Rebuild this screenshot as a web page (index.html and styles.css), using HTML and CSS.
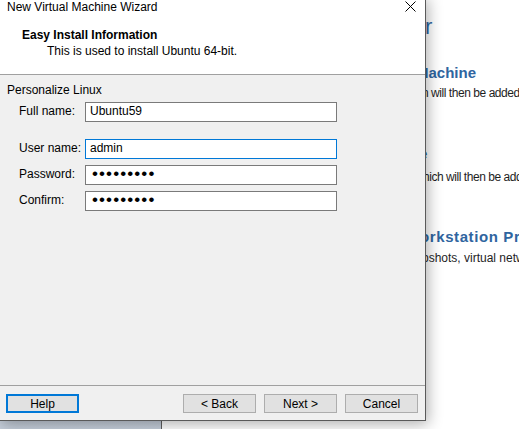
FILE: index.html
```html
<!DOCTYPE html>
<html lang="en">
<head>
<meta charset="utf-8">
<title>New Virtual Machine Wizard</title>
<link rel="stylesheet" href="styles.css">
</head>
<body>
<div class="screen">
  <div class="app">
    <aside class="sidebar"></aside>
    <main class="home">
      <div class="home-col">
        <div class="home-title"><span class="frag f-title">r</span></div>
        <div class="home-head h1"><span class="frag f-m">Machine</span></div>
        <div class="home-text t1"><span class="frag f-n">n will then be added to the top of your library.</span></div>
        <div class="home-head h2"><span class="frag f-e">e</span></div>
        <div class="home-text t2"><span class="frag f-h">hich will then be added to the top of your library.</span></div>
        <div class="home-head h3"><span class="frag f-o">orkstation Pro</span></div>
        <div class="home-text t3"><span class="frag f-p">pshots, virtual network management, and more.</span></div>
      </div>
    </main>
  </div>

  <div class="dialog">
    <div class="titlebar">
      <span class="title">New Virtual Machine Wizard</span>
      <svg class="close" width="11" height="11" viewBox="0 0 11 11" aria-label="Close">
        <path d="M0.5 0.5 L10.5 10.5 M10.5 0.5 L0.5 10.5" stroke="#000" stroke-width="1" fill="none"/>
      </svg>
    </div>
    <div class="header">
      <div class="header-title">Easy Install Information</div>
      <div class="header-sub">This is used to install Ubuntu 64-bit.</div>
    </div>
    <div class="body">
      <div class="group-title">Personalize Linux</div>
      <div class="form">
        <div class="row r-full"><span class="label">Full name:</span><div class="field">Ubuntu59</div></div>
        <div class="row r-user"><span class="label">User name:</span><div class="field focus">admin</div></div>
        <div class="row r-pass"><span class="label">Password:</span><div class="field"><span class="dots">•••••••••</span></div></div>
        <div class="row r-conf"><span class="label">Confirm:</span><div class="field"><span class="dots">•••••••••</span></div></div>
      </div>
    </div>
    <div class="footer">
      <button class="btn btn-default">Help</button>
      <div class="spacer"></div>
      <button class="btn">&lt; Back</button>
      <button class="btn">Next &gt;</button>
      <button class="btn">Cancel</button>
    </div>
  </div>
</div>
</body>
</html>
```
FILE: styles.css
```css
* { box-sizing: border-box; }
html, body { margin: 0; padding: 0; }
body {
  font-family: "Liberation Sans", Arial, sans-serif;
  font-size: 12px;
  color: #000;
  background: #fff;
}
.screen {
  position: relative;
  width: 519px;
  height: 429px;
  overflow: hidden;
  background: #fff;
}

/* background application window */
.app {
  display: flex;
  height: 100%;
}
.sidebar {
  width: 162px;
  flex: none;
  background: linear-gradient(#d5dde7, #c6cfdb);
  border-right: 1px solid #5e5e5e;
}
.home {
  flex: 1;
  background: #fff;
  overflow: hidden;
}
.home-col {
  padding-top: 14px;
  padding-left: 263px;
  white-space: nowrap;
}
.home-title {
  font-size: 22px;
  line-height: 26px;
  color: #2f65a0;
}
.home-head {
  font-size: 15px;
  line-height: 20px;
  font-weight: bold;
  color: #2f65a0;
}
.home-text {
  font-size: 12px;
  line-height: 16px;
  color: #1e1e1e;
}
.h1 { margin-top: 23px; }
.t1 { margin-top: 2px; }
.h2 { margin-top: 43px; }
.t2 { margin-top: 5px; }
.h3 { margin-top: 42px; letter-spacing: 0.6px; }
.t3 { margin-top: 3px; }
.t1, .t2 { letter-spacing: -0.45px; }
.frag { display: inline-block; }
.f-title { margin-left: 0; }
.f-m { margin-left: -9px; }
.f-n { margin-left: -3px; }
.f-e { margin-left: -6px; }
.f-h { margin-left: -2px; }
.f-o { margin-left: -5px; }
.f-p { margin-left: -3px; }

/* dialog window */
.dialog {
  position: absolute;
  left: -1px;
  top: -4px;
  width: 427px;
  height: 425px;
  border: 1px solid #5a5a5a;
  background: #f0f0f0;
  display: flex;
  flex-direction: column;
  box-shadow: 2px 3px 14px rgba(0, 0, 0, 0.32);
  z-index: 2;
}
.titlebar {
  height: 24px;
  flex: none;
  background: #fff;
  display: flex;
  justify-content: space-between;
  align-items: flex-start;
  padding: 2px 9px 0 7px;
  line-height: 16px;
}
.close { margin-top: 2px; display: block; }
.header {
  height: 54px;
  flex: none;
  background: #fff;
  border-bottom: 1px solid #a0a0a0;
  padding: 6px 0 0 22px;
  line-height: 16px;
}
.header-title { font-weight: bold; }
.header-sub { padding-left: 25px; }
.body {
  flex: 1;
  padding: 7px 0 0 7px;
  line-height: 16px;
}
.form {
  margin-top: 4px;
  padding-left: 12px;
  display: flex;
  flex-direction: column;
}
.row {
  display: flex;
  align-items: flex-start;
}
.r-user { margin-top: 17px; }
.r-pass, .r-conf { margin-top: 6px; }
.label {
  width: 66px;
  padding-top: 1px;
}
.field {
  width: 252px;
  height: 20px;
  border: 1px solid #7a7a7a;
  background: #fff;
  padding: 0 4px;
  line-height: 16px;
}
.field.focus { border-color: #0078d7; }
.dots {
  display: block;
  font-size: 17px;
  letter-spacing: 1.1px;
  line-height: 16px;
  padding-left: 2px;
}
.footer {
  flex: none;
  height: 35px;
  border-top: 1px solid #a0a0a0;
  padding: 8px 7px 0 6px;
  display: flex;
  align-items: flex-start;
  gap: 8px;
}
.spacer { flex: 1; }
.btn {
  width: 73px;
  height: 19px;
  padding: 0;
  margin: 0;
  border: 1px solid #adadad;
  background: #e1e1e1;
  font-family: "Liberation Sans", Arial, sans-serif;
  font-size: 12px;
  line-height: 16px;
  color: #000;
}
.btn-default { border: 2px solid #0078d7; }
```
